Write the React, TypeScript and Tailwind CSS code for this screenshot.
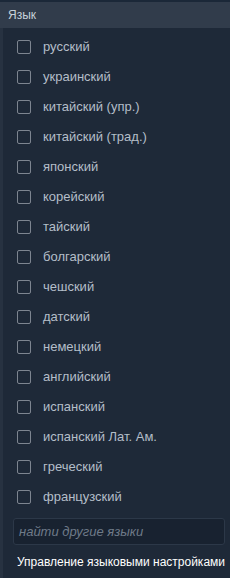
const languages = [
  'русский',
  'украинский',
  'китайский (упр.)',
  'китайский (трад.)',
  'японский',
  'корейский',
  'тайский',
  'болгарский',
  'чешский',
  'датский',
  'немецкий',
  'английский',
  'испанский',
  'испанский Лат. Ам.',
  'греческий',
  'французский',
];

export default function App() {
  return (
    <div
      className="w-[230px] h-[578px] bg-[#1b2838] pt-[2px] overflow-hidden"
      style={{ fontFamily: '"Liberation Sans", Arial, sans-serif' }}
    >
      <div className="h-[26px] bg-[#313c4b] flex items-center pl-[8px] text-[12px] text-[#c6d0da]">
        Язык
      </div>
      <div className="flex h-[550px]">
        <div className="w-[3px] bg-[#273241]" />
        <div className="flex-1 bg-[#1e2938]">
          <ul className="pt-[4px]">
            {languages.map((lang) => (
              <li key={lang} className="h-[30px] flex items-center">
                <span className="ml-[14px] w-[14px] h-[14px] border border-[#7d8590] rounded-[2px]" />
                <span className="ml-[12px] text-[13px] text-[#b4bec9]">{lang}</span>
              </li>
            ))}
          </ul>
          <div className="mt-[6px] ml-[10px] mr-[5px] h-[27px] bg-[#182230] border border-[#2c3848] rounded-[3px] flex items-center pl-[5px]">
            <span className="italic text-[13px] text-[#6f7b89]">найти другие языки</span>
          </div>
          <div className="mt-[8px] ml-[14px] text-[12px] text-white whitespace-nowrap">
            Управление языковыми настройками
          </div>
        </div>
      </div>
    </div>
  );
}
